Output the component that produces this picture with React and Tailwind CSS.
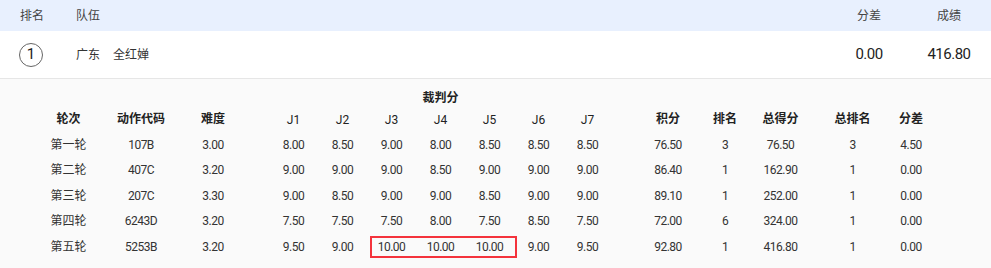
import React from 'react';

const rounds = [
  { round: '第一轮', code: '107B', diff: '3.00', judges: ['8.00', '8.50', '9.00', '8.00', '8.50', '8.50', '8.50'], points: '76.50', rank: '3', total: '76.50', totalRank: '3', gap: '4.50' },
  { round: '第二轮', code: '407C', diff: '3.20', judges: ['9.00', '9.00', '9.00', '8.50', '9.00', '9.00', '9.00'], points: '86.40', rank: '1', total: '162.90', totalRank: '1', gap: '0.00' },
  { round: '第三轮', code: '207C', diff: '3.30', judges: ['9.00', '8.50', '9.00', '9.00', '8.50', '9.00', '9.00'], points: '89.10', rank: '1', total: '252.00', totalRank: '1', gap: '0.00' },
  { round: '第四轮', code: '6243D', diff: '3.20', judges: ['7.50', '7.50', '7.50', '8.00', '7.50', '8.50', '7.50'], points: '72.00', rank: '6', total: '324.00', totalRank: '1', gap: '0.00' },
  { round: '第五轮', code: '5253B', diff: '3.20', judges: ['9.50', '9.00', '10.00', '10.00', '10.00', '9.00', '9.50'], points: '92.80', rank: '1', total: '416.80', totalRank: '1', gap: '0.00', highlight: true },
];

const Cell = ({ className = '', children }) => (
  <div className={`text-center shrink-0 ${className}`}>{children}</div>
);

const DetailRow = ({ r }) => (
  <div className="flex items-center h-[25.5px] tracking-[-0.5px]">
    <Cell className="w-[73px] tracking-normal">{r.round}</Cell>
    <Cell className="w-[72px]">{r.code}</Cell>
    <Cell className="w-[72px]">{r.diff}</Cell>
    <Cell className="w-[49px] ml-[20px]">{r.judges[0]}</Cell>
    <Cell className="w-[49px]">{r.judges[1]}</Cell>
    {/* J3 - J5, boxed when the round has a highlight */}
    <div className="relative flex items-center self-stretch">
      <Cell className="w-[49px]">{r.judges[2]}</Cell>
      <Cell className="w-[49px]">{r.judges[3]}</Cell>
      <Cell className="w-[49px]">{r.judges[4]}</Cell>
      {r.highlight && (
        <span className="absolute left-[3px] right-[-3px] top-[2px] bottom-[2px] border-2 border-[#f4333c]" />
      )}
    </div>
    <Cell className="w-[49px]">{r.judges[5]}</Cell>
    <Cell className="w-[49px]">{r.judges[6]}</Cell>
    <Cell className="w-[76px] ml-[18px]">{r.points}</Cell>
    <Cell className="w-[38px]">{r.rank}</Cell>
    <Cell className="w-[73px]">{r.total}</Cell>
    <Cell className="w-[71px]">{r.totalRank}</Cell>
    <Cell className="w-[46px]">{r.gap}</Cell>
  </div>
);

export default function App() {
  return (
    <div className="w-[991px] h-[268px] bg-white text-[#333] font-['Roboto','Noto_Sans_CJK_SC',sans-serif] overflow-hidden">
      {/* Header band */}
      <div className="flex items-center h-[31px] bg-[#e8f0fe] text-[12px] text-[#444]">
        <div className="w-[76px] pl-[20px]">排名</div>
        <div className="flex-1">队伍</div>
        <div className="w-[80px] text-center">分差</div>
        <div className="w-[80px] text-center">成绩</div>
        <div className="w-[2px]" />
      </div>

      {/* Athlete row */}
      <div className="flex items-center h-[48px] border-b border-[#e6e6e6]">
        <div className="w-[76px] pl-[19px]">
          <div className="w-[24px] h-[24px] rounded-full border border-[#666] flex items-center justify-center text-[15px] text-[#222]">
            1
          </div>
        </div>
        <div className="w-[37px] text-[12px]">广东</div>
        <div className="flex-1 text-[12px]">全红婵</div>
        <div className="w-[80px] text-center text-[15px] tracking-[-0.5px] text-[#222]">0.00</div>
        <div className="w-[80px] text-center text-[15px] tracking-[-0.5px] text-[#222]">416.80</div>
        <div className="w-[2px]" />
      </div>

      {/* Round details */}
      <div className="bg-[#fafafa] pl-[32px] pt-[9px] h-[189px] text-[12px]">
        <div className="flex items-center h-[20px]">
          <div className="w-[237px] shrink-0" />
          <div className="w-[343px] text-center font-bold text-[#222]">裁判分</div>
        </div>
        <div className="flex items-center h-[21px] mb-[3px] font-bold text-[#222]">
          <Cell className="w-[73px]">轮次</Cell>
          <Cell className="w-[72px]">动作代码</Cell>
          <Cell className="w-[72px]">难度</Cell>
          <Cell className="w-[49px] ml-[20px] font-normal pt-[2px]">J1</Cell>
          <Cell className="w-[49px] font-normal pt-[2px]">J2</Cell>
          <Cell className="w-[49px] font-normal pt-[2px]">J3</Cell>
          <Cell className="w-[49px] font-normal pt-[2px]">J4</Cell>
          <Cell className="w-[49px] font-normal pt-[2px]">J5</Cell>
          <Cell className="w-[49px] font-normal pt-[2px]">J6</Cell>
          <Cell className="w-[49px] font-normal pt-[2px]">J7</Cell>
          <Cell className="w-[76px] ml-[18px]">积分</Cell>
          <Cell className="w-[38px]">排名</Cell>
          <Cell className="w-[73px]">总得分</Cell>
          <Cell className="w-[71px]">总排名</Cell>
          <Cell className="w-[46px]">分差</Cell>
        </div>
        {rounds.map((r, idx) => (
          <DetailRow key={idx} r={r} />
        ))}
      </div>
    </div>
  );
}
